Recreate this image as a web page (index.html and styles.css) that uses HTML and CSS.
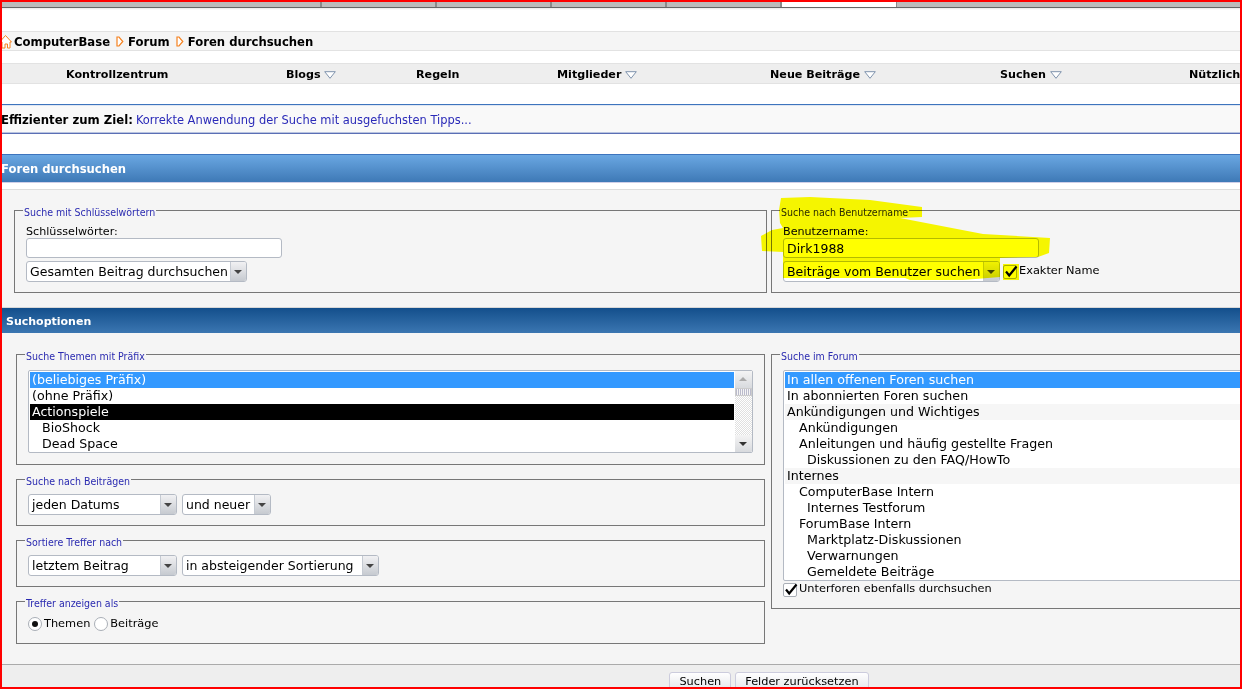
FILE: index.html
```html
<!DOCTYPE html>
<html lang="de">
<head>
<meta charset="utf-8">
<title>Foren durchsuchen</title>
<link rel="stylesheet" href="styles.css">
</head>
<body>
<div class="page">
  <div class="tabs">
    <div class="tab t1"></div><div class="tab t2"></div><div class="tab t2"></div><div class="tab t2"></div><div class="tab t2"></div><div class="tab active"></div><div class="tab rest"></div>
  </div>
  <div class="crumbs">
    <svg class="home" width="11" height="15" viewBox="0 0 11 15"><path d="M1 8V14H4V10H6.5V14H9V8H10.5L4.5 1.5L0 6.5V8Z" fill="#fff" stroke="#f58220" stroke-width="1"/></svg>
    <span>ComputerBase</span>
    <svg class="sep" width="8" height="11" viewBox="0 0 8 11"><path d="M1 1H3L6.8 5.5L3 10H1Z" fill="#fff" stroke="#f58220" stroke-width="1.2"/></svg>
    <span>Forum</span>
    <svg class="sep" width="8" height="11" viewBox="0 0 8 11"><path d="M1 1H3L6.8 5.5L3 10H1Z" fill="#fff" stroke="#f58220" stroke-width="1.2"/></svg>
    <span>Foren durchsuchen</span>
  </div>
  <nav class="nav">
    <span>Kontrollzentrum</span>
    <span>Blogs <svg class="caret" width="12" height="8" viewBox="0 0 12 8"><path d="M.7.7H11.3L6 7.3Z" fill="#fff" stroke="#7f93ad"/></svg></span>
    <span>Regeln</span>
    <span>Mitglieder <svg class="caret" width="12" height="8" viewBox="0 0 12 8"><path d="M.7.7H11.3L6 7.3Z" fill="#fff" stroke="#7f93ad"/></svg></span>
    <span>Neue Beiträge <svg class="caret" width="12" height="8" viewBox="0 0 12 8"><path d="M.7.7H11.3L6 7.3Z" fill="#fff" stroke="#7f93ad"/></svg></span>
    <span>Suchen <svg class="caret" width="12" height="8" viewBox="0 0 12 8"><path d="M.7.7H11.3L6 7.3Z" fill="#fff" stroke="#7f93ad"/></svg></span>
    <span>Nützliche Links</span>
  </nav>
  <div class="tip"><b>Effizienter zum Ziel:</b> <a href="#">Korrekte Anwendung der Suche mit ausgefuchsten Tipps...</a></div>
  <h1 class="head-light">Foren durchsuchen</h1>
  <div class="sub-gap"></div>
  <section class="panel top-panel">
    <fieldset class="fs">
      <legend>Suche mit Schlüsselwörtern</legend>
      <label class="lbl">Schlüsselwörter:</label>
      <input class="text" type="text">
      <div class="ctrl-row"><div class="sel w221"><span class="val">Gesamten Beitrag durchsuchen</span><i class="arrow"></i></div></div>
    </fieldset>
    <fieldset class="fs">
      <legend>Suche nach Benutzername</legend>
      <label class="lbl">Benutzername:</label>
      <input class="text" type="text" value="Dirk1988">
      <div class="ctrl-row">
        <div class="sel w217"><span class="val">Beiträge vom Benutzer suchen</span><i class="arrow"></i></div>
        <span class="check"><svg width="14" height="13" viewBox="0 0 14 13"><path d="M2 6.5L5.2 10.5L12.5 1.5" fill="none" stroke="#000" stroke-width="2.2"/></svg></span>
        <span class="small after-check">Exakter Name</span>
      </div>
    </fieldset>
    <svg class="marker" width="300" height="100" viewBox="0 0 300 100"><path d="M31 8L60 7L120 10L172 17V27L150 28L233 44L300 48L299 63L288 67L250 68V87L213 90L160 90L155 88H33V62L12 61L11 46L22 40L33 38L30 33L29 20ZM253 74H269V90H253Z" fill="#ffff00"/></svg>
  </section>
  <h2 class="head-dark">Suchoptionen</h2>
  <section class="panel options">
    <div class="col">
      <fieldset class="fs prefix">
        <legend>Suche Themen mit Präfix</legend>
        <div class="list">
          <div class="rows">
            <div class="row on">(beliebiges Präfix)</div>
            <div class="row">(ohne Präfix)</div>
            <div class="row black">Actionspiele</div>
            <div class="row sub">BioShock</div>
            <div class="row sub">Dead Space</div>
          </div>
          <div class="scroll">
            <span class="sb up"></span>
            <span class="thumb"></span>
            <span class="track"></span>
            <span class="sb down"></span>
          </div>
        </div>
      </fieldset>
      <fieldset class="fs short">
        <legend>Suche nach Beiträgen</legend>
        <div class="ctrl-row gap">
          <div class="sel w149"><span class="val">jeden Datums</span><i class="arrow"></i></div>
          <div class="sel w89"><span class="val">und neuer</span><i class="arrow"></i></div>
        </div>
      </fieldset>
      <fieldset class="fs short">
        <legend>Sortiere Treffer nach</legend>
        <div class="ctrl-row gap">
          <div class="sel w149"><span class="val">letztem Beitrag</span><i class="arrow"></i></div>
          <div class="sel w197"><span class="val">in absteigender Sortierung</span><i class="arrow"></i></div>
        </div>
      </fieldset>
      <fieldset class="fs show">
        <legend>Treffer anzeigen als</legend>
        <div class="radios">
          <span class="radio selected"></span><span class="small">Themen</span>
          <span class="radio"></span><span class="small">Beiträge</span>
        </div>
      </fieldset>
    </div>
    <div class="col">
      <fieldset class="fs forum">
        <legend>Suche im Forum</legend>
        <div class="list wide">
          <div class="rows">
            <div class="row on">In allen offenen Foren suchen</div>
            <div class="row">In abonnierten Foren suchen</div>
            <div class="row cat">Ankündigungen und Wichtiges</div>
            <div class="row in1">Ankündigungen</div>
            <div class="row in1">Anleitungen und häufig gestellte Fragen</div>
            <div class="row in2">Diskussionen zu den FAQ/HowTo</div>
            <div class="row cat">Internes</div>
            <div class="row in1">ComputerBase Intern</div>
            <div class="row in2">Internes Testforum</div>
            <div class="row in1">ForumBase Intern</div>
            <div class="row in2">Marktplatz-Diskussionen</div>
            <div class="row in2">Verwarnungen</div>
            <div class="row in2">Gemeldete Beiträge</div>
          </div>
        </div>
        <div class="sub-check">
          <span class="check"><svg width="14" height="13" viewBox="0 0 14 13"><path d="M2 6.5L5.2 10.5L12.5 1.5" fill="none" stroke="#000" stroke-width="2.2"/></svg></span>
          <span class="small">Unterforen ebenfalls durchsuchen</span>
        </div>
      </fieldset>
    </div>
  </section>
  <footer class="foot">
    <button class="btn" type="button">Suchen</button>
    <button class="btn" type="button">Felder zurücksetzen</button>
  </footer>
</div>
<div class="frame"></div>
</body>
</html>
```
FILE: styles.css
```css
* { box-sizing: border-box; }
html, body { margin: 0; padding: 0; width: 1242px; height: 689px; overflow: hidden; background: #fff; }
body { font-family: "DejaVu Sans", Verdana, sans-serif; font-size: 11px; color: #000; }
.page { width: 1538px; height: 689px; overflow: hidden; background: #fff; display: flex; flex-direction: column; }
.frame { position: absolute; left: 0; top: 0; width: 1242px; height: 689px; border: 2px solid #f00; pointer-events: none; }

.tabs { height: 10px; flex: none; display: flex; background: linear-gradient(#bcbcbc 0 7px, #666 7px 8px, #e8e8e8 8px, #fff 10px); }
.tab { height: 7px; border-right: 2px solid #8a8a8a; flex: none; }
.t1 { width: 322px; }
.t2 { width: 115px; }
.tab.active { width: 115px; background: #fff; border-right: 1px solid #8a8a8a; }
.tab.rest { border: 0; }

.crumbs { flex: none; margin-top: 21px; height: 20px; background: #f5f5f5; border-top: 1px solid #e2e2e2; border-bottom: 1px solid #e2e2e2; display: flex; align-items: center; font-weight: bold; font-size: 11.65px; padding: 1px 0 0 1px; white-space: nowrap; }
.home { margin-right: 2px; }
.sep { margin: 0 4px 0 6px; }

.nav { flex: none; margin-top: 12px; height: 21px; background: #eee; border-top: 1px solid #e2e2e2; border-bottom: 1px solid #e2e2e2; display: grid; grid-template-columns: 220px 130px 141px 213px 230px 189px auto; align-items: center; padding: 1px 0 0 66px; font-weight: bold; font-size: 11.15px; white-space: nowrap; }
.caret { vertical-align: -1px; }

.tip { flex: none; margin-top: 20px; height: 30px; background: #f9f9f9; border-top: 1px solid #3d74bd; border-bottom: 1px solid #5b6fb5; box-shadow: inset 0 -1px #b9c4e0, inset 0 1px #dfe6f2; padding: 1px 0 0 1px; display: flex; align-items: center; gap: 3px; white-space: nowrap; }
.tip b { font-size: 11.7px; }
.tip a { color: #2a2ab8; text-decoration: none; font-size: 11.45px; }

.head-light { flex: none; margin: 20px 0 0; height: 29px; background: linear-gradient(#6aa7e2, #3e79b6); border-top: 1px solid #3d74bd; border-bottom: 1px solid #cfcfe8; color: #fff; font-size: 11.6px; font-weight: bold; line-height: 29px; padding-left: 1px; }
.sub-gap { height: 7px; border-bottom: 1px solid #ddd; flex: none; }

.panel { background: #f5f5f5; display: grid; flex: none; }
.top-panel { height: 118px; padding: 13px 0 0 14px; grid-template-columns: 753px 600px; column-gap: 4px; border-bottom: 1px solid #d8d8d8; position: relative; }
.options { height: 331px; padding: 14px 0 0 16px; grid-template-columns: 749px 600px; column-gap: 6px; }
.col { display: flex; flex-direction: column; gap: 7px; }

.head-dark { margin: 0; height: 25px; flex: none; background: linear-gradient(#134f8c, #3b76b1); color: #fff; font-size: 11px; font-weight: bold; line-height: 27px; padding-left: 6px; }

.fs { margin: 0; min-width: 0; border: 1px solid #777; border-radius: 0; padding: 0 0 0 11px; height: 90px; }
legend { font-family: "DejaVu Sans Condensed", "DejaVu Sans", sans-serif; font-size: 10.5px; line-height: 12px; color: #2a2ab0; padding: 3px 1px 0; margin-left: -3px; white-space: nowrap; }
.lbl { display: block; line-height: 13px; margin-top: 7px; font-size: 11.15px; }
.text { display: block; width: 256px; height: 20px; border: 1px solid #b4bac4; border-radius: 3px; background: #fff; font: 12.5px "DejaVu Sans", sans-serif; padding: 0 3px; margin: 0; outline: 0; }
.ctrl-row { display: flex; align-items: center; margin-top: 3px; }
.ctrl-row.gap { gap: 5px; margin-top: 7px; }

.sel { height: 21px; display: flex; align-items: center; justify-content: space-between; background: #fff; border: 1px solid #b4bac4; border-radius: 3px; font-size: 12.5px; overflow: hidden; flex: none; }
.val { padding-left: 3px; white-space: nowrap; }
.arrow { width: 16px; height: 19px; flex: none; background: linear-gradient(#f1f1f3, #c6cad0); border-left: 1px solid #c5cad2; position: relative; }
.arrow::after { content: ""; position: absolute; left: 3px; top: 8px; border: 4px solid transparent; border-top: 4px solid #444; border-bottom: 0; }
.w221 { width: 221px; }
.w217 { width: 217px; }
.w149 { width: 149px; }
.w89 { width: 89px; }
.w197 { width: 197px; }

.check { width: 14px; height: 14px; flex: none; display: inline-flex; background: #fff; border: 1px solid #a9aeb6; border-radius: 2px; margin-left: 3px; position: relative; }
.check svg { position: absolute; left: 0; top: -1px; }
.small { font-size: 11.35px; white-space: nowrap; }
.after-check { margin: -3px 0 0 2px; }

.marker { position: absolute; left: 750px; top: 0; mix-blend-mode: multiply; pointer-events: none; }

.prefix { height: 118px; }
.short { height: 54px; }
.show { height: 50px; }
.forum { height: 262px; }
.list { margin: 8px 0 0; height: 83px; width: 725px; background: #fff; border: 1px solid #b4bac4; border-radius: 2px; display: flex; font-size: 12.65px; overflow: hidden; }
.list.wide { width: 560px; height: 211px; }
.rows { flex: 1; padding: 1px; min-width: 0; }
.row { height: 16px; line-height: 16px; padding-left: 2px; white-space: nowrap; }
.row.on { background: #3399ff; color: #fff; }
.row.black { background: #000; color: #fff; }
.row.cat { background: #f6f6f6; }
.sub { padding-left: 12px; }
.in1 { padding-left: 14px; }
.in2 { padding-left: 22px; }
.scroll { width: 17px; flex: none; display: flex; flex-direction: column; background: repeating-conic-gradient(#e0e0e0 0 25%, #fff 0 50%) 0 0 / 2px 2px; }
.sb { height: 17px; background: linear-gradient(#f4f4f4, #d8dade); position: relative; }
.sb::after { content: ""; position: absolute; left: 4px; border: 4px solid transparent; }
.sb.up::after { top: 6px; border-bottom: 4px solid #aaa; border-top: 0; }
.sb.down { margin-top: auto; }
.sb.down::after { top: 7px; border-top: 4px solid #333; border-bottom: 0; }
.thumb { height: 8px; background: repeating-linear-gradient(90deg, #bbc 0 1px, #f4f4f4 1px 2px); border: 1px solid #ccc; }
.track { flex: 1; }

.radios { display: flex; align-items: center; margin-top: 8px; }
.radios .small { margin-top: -2px; }
.radio { width: 14px; height: 14px; border: 1px solid #a9aeb6; border-radius: 50%; background: #fff; flex: none; position: relative; margin-right: 2px; }
.small + .radio { margin-left: 4px; }
.radio.selected::after { content: ""; position: absolute; left: 3px; top: 3px; width: 6px; height: 6px; border-radius: 50%; background: #111; }
.sub-check { display: flex; align-items: center; margin-top: 2px; }
.sub-check .check { margin-left: 0; }
.sub-check .small { margin: -4px 0 0 2px; }

.foot { flex: none; height: 25px; background: #eee; border-top: 1px solid #aaa; display: flex; justify-content: center; align-items: flex-start; gap: 4px; padding: 7px 0 0; }
.btn { height: 19px; flex: none; background: linear-gradient(#fff, #e4e6ea); border: 1px solid #ccd; border-radius: 3px; font: 11.3px "DejaVu Sans", sans-serif; color: #000; padding: 0 9px; }
```
